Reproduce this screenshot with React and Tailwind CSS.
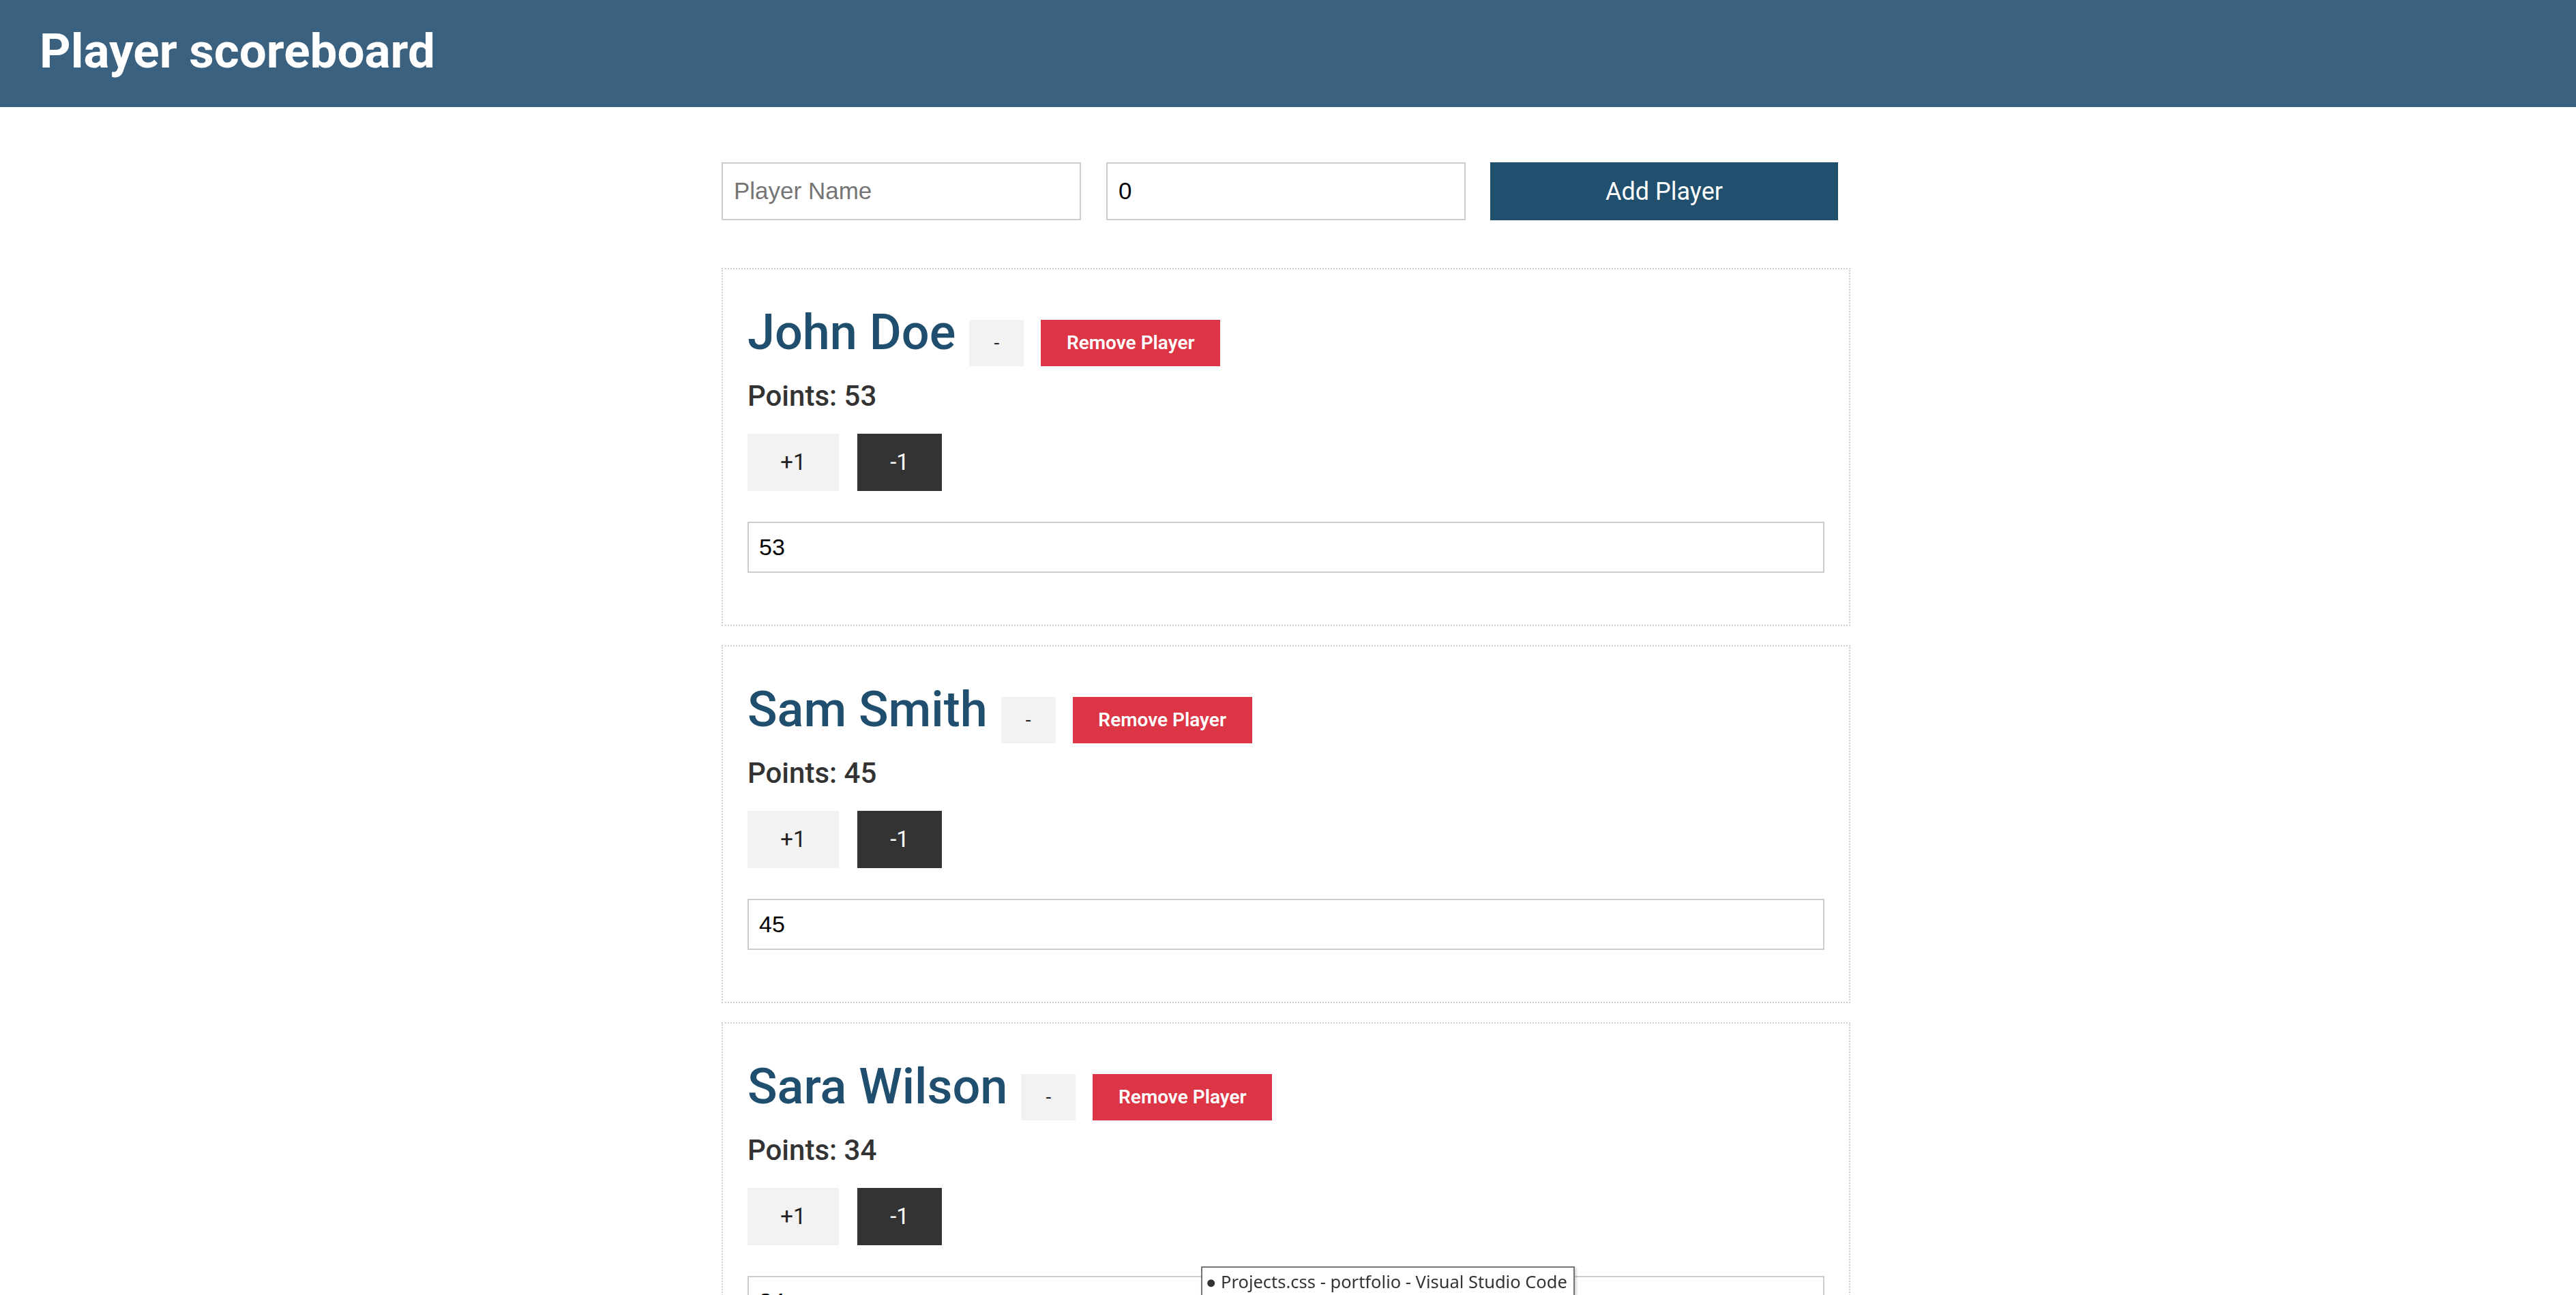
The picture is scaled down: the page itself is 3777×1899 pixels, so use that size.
import React from "react";

const players = [
  { name: "John Doe", points: 53 },
  { name: "Sam Smith", points: 45 },
  { name: "Sara Wilson", points: 34 },
];

function PlayerCard({ name, points }) {
  return (
    <div className="border-2 border-dotted border-[#cfcfcf] pl-[36px] pr-[36px] pt-[57px] pb-[76px] bg-white">
      <div className="flex items-baseline">
        <h2 className="m-0 text-[72px] leading-none font-medium text-[#1f4e6e] font-['Roboto',sans-serif]">
          {name}
        </h2>
        <button className="ml-[20px] w-[80px] h-[68px] bg-[#f2f2f2] text-[#222] text-[28px] font-['Roboto',sans-serif] flex items-center justify-center">
          -
        </button>
        <button className="ml-[25px] w-[263px] h-[68px] bg-[#dc3545] text-white text-[28px] font-semibold font-['Roboto',sans-serif] flex items-center justify-center">
          Remove Player
        </button>
      </div>
      <div className="mt-[23px] text-[42px] leading-none font-medium text-[#333] font-['Roboto',sans-serif]">
        Points: {points}
      </div>
      <div className="mt-[34px] flex gap-[27px]">
        <button className="w-[134px] h-[84px] bg-[#f2f2f2] text-[#222] text-[33px] font-['Roboto',sans-serif]">
          +1
        </button>
        <button className="w-[124px] h-[84px] bg-[#333333] text-white text-[33px] font-['Roboto',sans-serif]">
          -1
        </button>
      </div>
      <div className="mt-[45px] w-[1579px] h-[75px] border-2 border-[#cccccc] flex items-center pl-[15px] text-[34px] text-black font-['Liberation_Sans',Arial,sans-serif]">
        {points}
      </div>
    </div>
  );
}

export default function App() {
  return (
    <div className="min-h-screen bg-white relative">
      <header className="h-[157px] bg-[#3b6180] flex items-center pl-[58px]">
        <h1 className="m-0 text-[71px] leading-none font-bold text-white font-['Roboto',sans-serif] -mt-[8px]">
          Player scoreboard
        </h1>
      </header>
      <main className="w-[1655px] ml-[1058px] pt-[81px]">
        <div className="flex items-center h-[85px]">
          <div className="w-[527px] h-[85px] border-2 border-[#cccccc] flex items-center pl-[16px] text-[35px] text-[#757575] font-['Liberation_Sans',Arial,sans-serif]">
            Player Name
          </div>
          <div className="ml-[37px] w-[527px] h-[85px] border-2 border-[#cccccc] flex items-center pl-[16px] text-[35px] text-black font-['Liberation_Sans',Arial,sans-serif]">
            0
          </div>
          <button className="ml-[36px] w-[510px] h-[85px] bg-[#214f6e] text-white text-[36px] font-['Roboto',sans-serif]">
            Add Player
          </button>
        </div>
        <div className="mt-[70px] flex flex-col gap-[28px]">
          {players.map((p) => (
            <PlayerCard key={p.name} name={p.name} points={p.points} />
          ))}
        </div>
      </main>
      <div className="fixed left-[1761px] top-[1857px] h-[60px] w-[548px] border-2 border-[#767676] bg-white px-[5px] pt-[1px] text-[25.5px] text-[#333] font-['Noto_Sans',sans-serif] whitespace-nowrap shadow-[2px_2px_4px_rgba(0,0,0,0.2)]">
        ● Projects.css - portfolio - Visual Studio Code
      </div>
    </div>
  );
}
